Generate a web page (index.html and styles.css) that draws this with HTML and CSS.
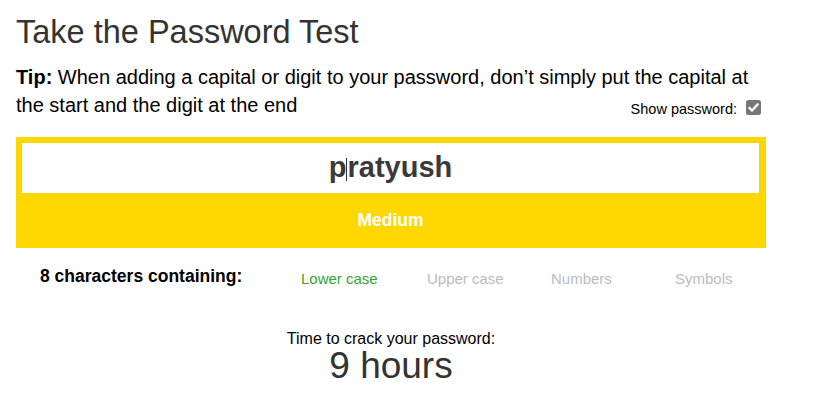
FILE: index.html
```html
<!DOCTYPE html>
<html lang="en">
<head>
<meta charset="utf-8">
<title>Take the Password Test</title>
<link rel="stylesheet" href="styles.css">
</head>
<body>
<main class="page">
  <h1 class="title">Take the Password Test</h1>
  <div class="tip">
    <div class="tip-line"><strong>Tip:</strong> When adding a capital or digit to your password, don’t simply put the capital at</div>
    <div class="tip-row">
      <span class="tip-line">the start and the digit at the end</span>
      <label class="show">
        <span class="show-text">Show password:</span>
        <span class="checkbox">
          <svg viewBox="0 0 15 15" width="15" height="15" aria-hidden="true">
            <rect x="0" y="0" width="15" height="15" rx="2.5" fill="#777"/>
            <path d="M3.3 7.8 L6.1 10.6 L11.8 4.2" fill="none" stroke="#fff" stroke-width="2.2" stroke-linecap="round" stroke-linejoin="round"/>
          </svg>
        </span>
      </label>
    </div>
  </div>

  <section class="meter">
    <div class="field">p<span class="caret"></span>ratyush</div>
    <div class="strength">Medium</div>
  </section>

  <div class="chars">
    <div class="chars-label">8 characters containing:</div>
    <div class="opt on">Lower case</div>
    <div class="opt">Upper case</div>
    <div class="opt">Numbers</div>
    <div class="opt">Symbols</div>
  </div>

  <div class="crack">
    <div class="crack-label">Time to crack your password:</div>
    <div class="crack-time">9 hours</div>
  </div>
</main>
</body>
</html>
```

FILE: styles.css
```css
html, body {
  margin: 0;
  padding: 0;
  background: #fff;
}

body {
  font-family: Arial, "Liberation Sans", Helvetica, sans-serif;
  color: #000;
}

.page {
  width: 750px;
  padding: 14px 0 0 16px;
}

.title {
  margin: 0;
  font-size: 32.5px;
  font-weight: normal;
  line-height: 37px;
  color: #333;
}

.tip {
  margin-top: 12px;
  font-size: 20px;
  line-height: 28px;
}

.tip strong {
  font-weight: bold;
}

.tip-row {
  display: flex;
  justify-content: space-between;
  align-items: flex-end;
}

.show {
  display: flex;
  align-items: center;
  gap: 9px;
  margin-right: 5px;
  margin-bottom: 1px;
  font-size: 14.5px;
  line-height: 17px;
}

.checkbox {
  display: flex;
  margin-top: -4px;
}

.meter {
  margin-top: 18px;
  background: #ffd700;
  padding: 6px 7px 0 6px;
}

.field {
  background: #fff;
  height: 50px;
  display: flex;
  align-items: center;
  justify-content: center;
  font-size: 29px;
  font-weight: bold;
  color: #3a3a3a;
  padding-bottom: 2px;
  box-sizing: border-box;
}

.caret {
  display: inline-block;
  width: 1px;
  height: 23px;
  background: #333;
  margin: 4px 0 0 0;
}

.strength {
  height: 55px;
  display: flex;
  align-items: center;
  justify-content: center;
  color: #fff;
  font-weight: bold;
  font-size: 17.5px;
}

.chars {
  display: grid;
  grid-template-columns: 285px 126px 124px 124px 1fr;
  align-items: start;
  margin-top: 18px;
}

.chars-label {
  padding-left: 24px;
  font-weight: bold;
  font-size: 17.5px;
  line-height: 20px;
}

.opt {
  font-size: 15px;
  line-height: 20px;
  color: #bbb;
  padding-top: 3px;
}

.opt.on {
  color: #35a52f;
}

.crack {
  margin-top: 41px;
  text-align: center;
}

.crack-label {
  font-size: 16px;
  line-height: 18px;
}

.crack-time {
  font-size: 37px;
  line-height: 36px;
  color: #333;
}
```
